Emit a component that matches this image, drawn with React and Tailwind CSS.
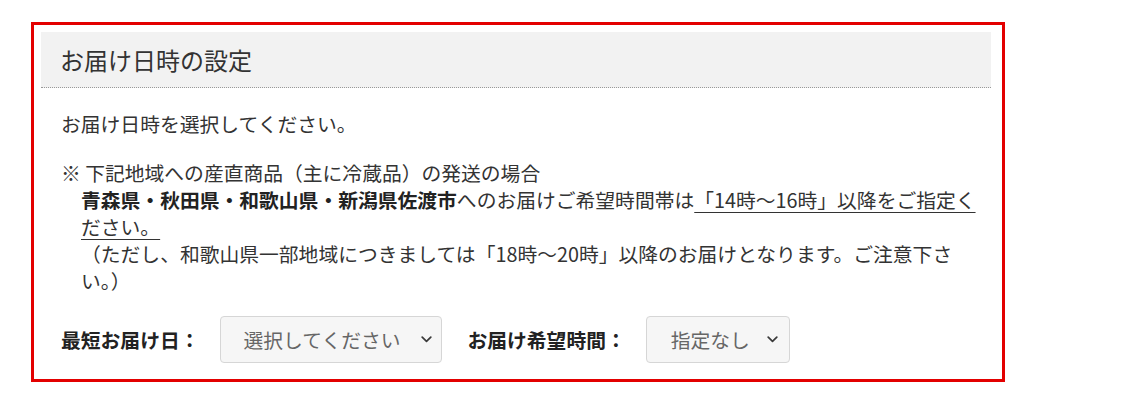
import React from 'react'

function Chevron() {
  return (
    <svg width="11" height="7" viewBox="0 0 11 7" fill="none">
      <path d="M1.2 1.2 L5.5 5.4 L9.8 1.2" stroke="#3a3a3a" strokeWidth="1.7" strokeLinecap="round" strokeLinejoin="round" />
    </svg>
  )
}

function FakeSelect({ label, width, pl, pr }) {
  return (
    <div className={`flex items-center justify-between h-[47px] rounded-[4px] border border-[#d6d6d6] bg-[#f6f6f6] text-[#666] ${width} ${pl} ${pr}`}>
      <span>{label}</span>
      <Chevron />
    </div>
  )
}

export default function App() {
  return (
    <div className="min-h-[404px] bg-white pt-[22px] pl-[31px] font-['Noto_Sans_CJK_JP','Noto_Sans',sans-serif] text-[#333]">
      <div className="w-[974px] h-[360px] border-[3px] border-[#e30000] pt-[7px] pl-[7px]">
        <div className="w-[950px] h-[56px] flex items-center px-[19px] bg-[#f2f2f2] border-b border-dotted border-[#999] text-[24px] text-[#333]">
          お届け日時の設定
        </div>

        <div className="w-[950px] pl-[20px] pr-[13px] pt-[22px] text-[19.8px] leading-[27px]">
          <p>お届け日時を選択してください。</p>

          <div className="mt-[22px] whitespace-nowrap">
            <p>※ 下記地域への産直商品（主に冷蔵品）の発送の場合</p>
            <div className="pl-[20px]">
              <span className="font-bold text-[#222]">青森県・秋田県・和歌山県・新潟県佐渡市</span>
              へのお届けご希望時間帯は
              <span className="underline underline-offset-[4px]">「14時〜16時」以降をご指定く</span>
              <br />
              <span className="underline underline-offset-[4px]">ださい。</span>
              <br />
              （ただし、和歌山県一部地域につきましては「18時〜20時」以降のお届けとなります。ご注意下さ
              <br />
              い。）
            </div>
          </div>

          <div className="mt-[22px] flex items-center">
            <span className="font-bold text-[#222] mr-[21px]">最短お届け日：</span>
            <FakeSelect label="選択してください" width="w-[222px]" pl="pl-[22px]" pr="pr-[9px]" />
            <span className="font-bold text-[#222] ml-[25px] mr-[20px]">お届け希望時間：</span>
            <FakeSelect label="指定なし" width="w-[144px]" pl="pl-[24px]" pr="pr-[11px]" />
          </div>
        </div>
      </div>
    </div>
  )
}
